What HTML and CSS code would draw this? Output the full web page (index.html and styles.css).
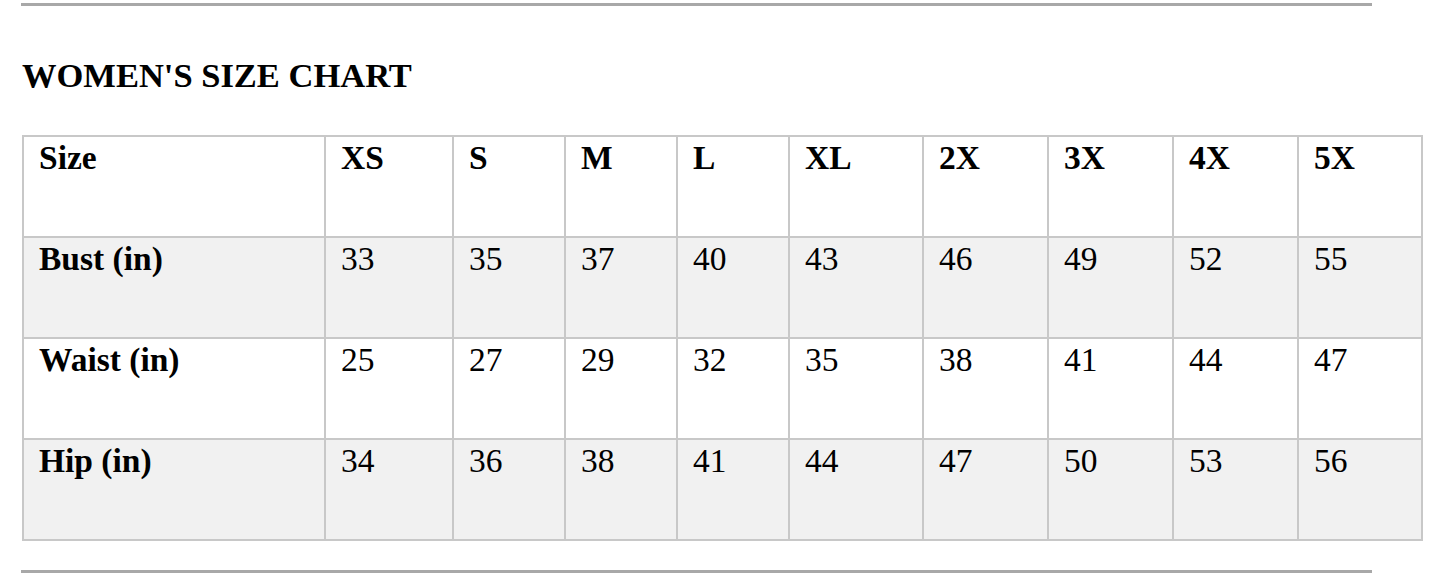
FILE: index.html
```html
<!DOCTYPE html>
<html lang="en">
<head>
<meta charset="utf-8">
<title>Women's Size Chart</title>
<link rel="stylesheet" href="styles.css">
</head>
<body>
<div class="page">
  <hr class="rule">
  <h2 class="title">WOMEN'S SIZE CHART</h2>
  <table class="chart">
    <colgroup>
      <col class="c-label">
      <col class="c-xs">
      <col class="c-s">
      <col class="c-m">
      <col class="c-l">
      <col class="c-xl">
      <col class="c-2x">
      <col class="c-3x">
      <col class="c-4x">
      <col class="c-5x">
    </colgroup>
    <tr class="row">
      <th>Size</th><th>XS</th><th>S</th><th>M</th><th>L</th><th>XL</th><th>2X</th><th>3X</th><th>4X</th><th>5X</th>
    </tr>
    <tr class="row alt">
      <th>Bust (in)</th><td>33</td><td>35</td><td>37</td><td>40</td><td>43</td><td>46</td><td>49</td><td>52</td><td>55</td>
    </tr>
    <tr class="row">
      <th>Waist (in)</th><td>25</td><td>27</td><td>29</td><td>32</td><td>35</td><td>38</td><td>41</td><td>44</td><td>47</td>
    </tr>
    <tr class="row alt">
      <th>Hip (in)</th><td>34</td><td>36</td><td>38</td><td>41</td><td>44</td><td>47</td><td>50</td><td>53</td><td>56</td>
    </tr>
  </table>
  <hr class="rule rule-bottom">
</div>
</body>
</html>
```

FILE: styles.css
```css
html, body {
  margin: 0;
  padding: 0;
  background: #ffffff;
}

body {
  font-family: "Liberation Serif", "Times New Roman", serif;
  color: #000;
}

.page {
  padding: 3px 0 0 21px;
}

.rule {
  display: block;
  width: 1351px;
  height: 3px;
  margin: 0;
  border: 0;
  background: #a8a8a8;
}

.rule-bottom {
  margin-top: 29px;
}

.title {
  margin: 50px 0 0 1px;
  font-size: 34.5px;
  font-weight: bold;
  line-height: normal;
}

.chart {
  margin: 40px 0 0 1px;
  width: 1400px;
  table-layout: fixed;
  border-collapse: collapse;
  border: 2px solid #c8c8c8;
}

.c-label { width: 302px; }
.c-xs { width: 128px; }
.c-s { width: 112px; }
.c-m { width: 112px; }
.c-l { width: 112px; }
.c-xl { width: 134px; }
.c-2x { width: 125px; }
.c-3x { width: 125px; }
.c-4x { width: 125px; }
.c-5x { width: 124px; }

.chart th,
.chart td {
  border: 2px solid #c8c8c8;
  height: 97px;
  padding: 2px 15px 0;
  vertical-align: top;
  text-align: left;
  font-size: 33.5px;
  line-height: normal;
}

.chart th {
  font-weight: bold;
}

.chart td {
  font-weight: normal;
}

.row.alt {
  background: #f1f1f1;
}
```
